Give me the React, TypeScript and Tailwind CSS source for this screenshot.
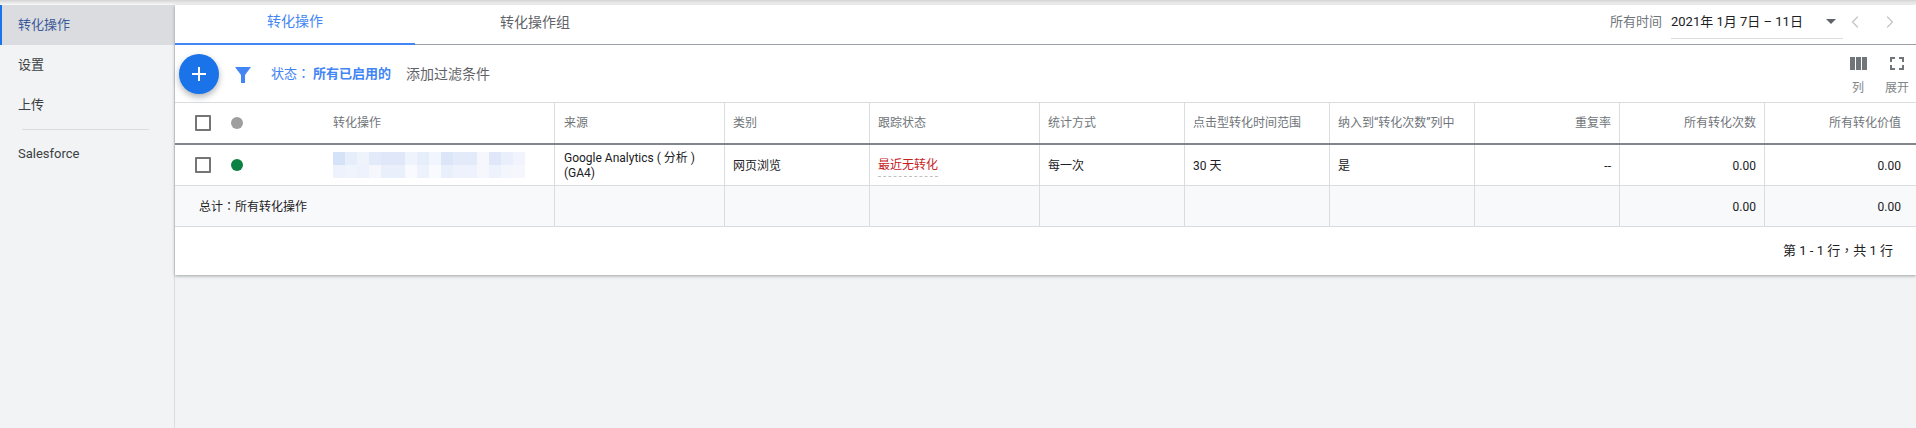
import { ChevronLeft, ChevronRight } from "lucide-react";

const columns = [
  { label: "来源", right: false },
  { label: "类别", right: false },
  { label: "跟踪状态", right: false },
  { label: "统计方式", right: false },
  { label: "点击型转化时间范围", right: false },
  { label: "纳入到“转化次数”列中", right: false },
  { label: "重复率", right: true },
  { label: "所有转化次数", right: true },
  { label: "所有转化价值", right: true },
];

const gridCols = "grid grid-cols-[379px_170px_145px_170px_145px_145px_145px_145px_145px_152px]";

const blurTop = [
  "bg-[#d5e2f8]", "bg-[#e6edfb]", "bg-[#eef3fc]", "bg-[#e3eafa]", "bg-[#dfe7f9]", "bg-[#dfe7f9]", "bg-[#eef3fc]", "bg-[#e6edfb]",
  "bg-[#f1f5fd]", "bg-[#dde6f9]", "bg-[#e3eafa]", "bg-[#e3eafa]", "bg-[#f5f7fd]", "bg-[#dfe7f9]", "bg-[#e9effb]", "bg-[#f1f4fc]",
];
const blurBottom = [
  "bg-[#eef2fc]", "bg-[#f0f4fc]", "bg-[#eef2fc]", "bg-[#f5f7fd]", "bg-[#eaf0fb]", "bg-[#eaf0fb]", "bg-[#f8fafe]", "bg-[#eef2fc]",
  "bg-[#f8fafe]", "bg-[#eaf0fb]", "bg-[#eef2fc]", "bg-[#eef2fc]", "bg-[#f5f7fd]", "bg-[#eef2fc]", "bg-[#f3f6fc]", "bg-[#f5f7fd]",
];

// the reference sets full-width punctuation centred in its box
function Punct({ children }: { children: string }) {
  return <span className="font-['Noto_Sans_CJK_TC',sans-serif]">{children}</span>;
}

function Checkbox() {
  return <div className="w-[16px] h-[16px] border-2 border-[#757575] rounded-[1px] bg-white" />;
}

function SideItem({ label, active }: { label: string; active?: boolean }) {
  return (
    <div
      className={`h-[40px] flex items-center text-[13px] ${
        active ? "bg-[#dadce0] border-l-2 border-[#1a73e8] pl-[16px] text-[#3c5a9a]" : "pl-[18px] text-[#3c4043]"
      }`}
    >
      {label}
    </div>
  );
}

function BodyCell({ children, right, pr }: { children?: React.ReactNode; right?: boolean; pr?: string }) {
  return (
    <div
      className={`border-l border-[#dadce0] flex items-center pt-px text-[12px] text-[#202124] ${
        right ? `justify-end ${pr ?? "pr-[8px]"}` : "pl-[8px]"
      }`}
    >
      {children}
    </div>
  );
}

export default function App() {
  return (
    <div className="w-[1916px] h-[428px] overflow-hidden bg-[#f1f3f4] font-['Roboto','Noto_Sans_CJK_SC',sans-serif]">
      <div className="h-[5px] bg-gradient-to-b from-[#d4d4d4] to-[#fafafa]" />
      <div className="flex">
        <aside className="w-[175px] shrink-0 h-[423px] bg-[#f1f3f4] border-r border-[#dadce0]">
          <SideItem label="转化操作" active />
          <SideItem label="设置" />
          <SideItem label="上传" />
          <div className="h-px bg-[#dadce0] ml-[22px] mr-[25px] mt-[4px] mb-[4px]" />
          <SideItem label="Salesforce" />
        </aside>

        <main className="w-[1741px]">
          <div className="bg-white shadow-[0_1px_3px_rgba(60,64,67,0.45)]">
            {/* tabs and date range */}
            <div className="h-[40px] flex items-stretch border-b border-[#9aa0a6]">
              <div className="w-[240px] -mb-px border-b-2 border-[#4285f4] flex items-center justify-center pb-[5px] text-[14px] text-[#4285f4]">
                转化操作
              </div>
              <div className="w-[240px] flex items-center justify-center pb-[5px] text-[14px] text-[#5f6368]">转化操作组</div>
              <div className="flex-1 flex items-center justify-end pb-[5px] pr-[16px]">
                <span className="text-[13px] text-[#70757a] mr-[9px]">所有时间</span>
                <div className="w-[172px] h-[31px] border-b border-[#dadce0] flex items-center justify-between pr-[4px] pb-[2px] mt-[2px]">
                  <span className="text-[13px] text-[#202124] whitespace-nowrap">2021年 1月 7日 – 11日</span>
                  <span className="w-0 h-0 border-x-[5px] border-x-transparent border-t-[5px] border-t-[#5f6368] mr-[3px]" />
                </div>
                <ChevronLeft size={20} strokeWidth={1.6} className="text-[#c4c7cb] ml-[2px]" />
                <ChevronRight size={20} strokeWidth={1.6} className="text-[#c4c7cb] ml-[15px]" />
              </div>
            </div>

            {/* filter bar */}
            <div className="h-[58px] flex items-center border-b border-[#dadce0] pl-[4px] pr-[7px]">
              <button className="w-[40px] h-[40px] rounded-full bg-[#1a73e8] flex items-center justify-center shadow-[0_3px_6px_rgba(60,64,67,0.4)]">
                <svg width="14" height="14" viewBox="0 0 14 14">
                  <path d="M6 0h2v6h6v2H8v6H6V8H0V6h6z" fill="#fff" />
                </svg>
              </button>
              <svg width="16" height="16" viewBox="0 0 16 16" className="ml-[16px] mt-[2px]">
                <path d="M0 0h16L10 8v8H6V8z" fill="#4285f4" />
              </svg>
              <span className="ml-[20px] text-[13px] text-[#4285f4]">
                状态<Punct>：</Punct>
              </span>
              <span className="ml-[3px] text-[13px] font-bold text-[#4285f4]">所有已启用的</span>
              <span className="ml-[15px] mt-[2px] text-[14px] text-[#5f6368]">添加过滤条件</span>
              <div className="ml-auto self-start mt-[12px] flex gap-[17px] text-[12px] text-[#80868b]">
                <div className="w-[20px] flex flex-col items-center gap-[11px]">
                  <svg width="17" height="13" viewBox="0 0 17 13">
                    <path d="M0 0h5v13H0zM6 0h5v13H6zM12 0h5v13h-5z" fill="#70757a" />
                  </svg>
                  <span className="leading-[14px]">列</span>
                </div>
                <div className="w-[24px] flex flex-col items-center gap-[11px]">
                  <svg width="14" height="13" viewBox="0 0 14 13">
                    <path d="M0 0h5v2H2v3H0zM9 0h5v5h-2V2H9zM0 8h2v3h3v2H0zM12 8h2v5H9v-2h3z" fill="#70757a" />
                  </svg>
                  <span className="leading-[14px] whitespace-nowrap">展开</span>
                </div>
              </div>
            </div>

            {/* table */}
            <div className={`${gridCols} h-[42px] border-b-2 border-[#80868b]`}>
              <div className="flex items-center pl-[20px]">
                <Checkbox />
                <span className="w-[12px] h-[12px] rounded-full bg-[#9e9e9e] ml-[20px]" />
                <span className="ml-[90px] text-[12px] text-[#70757a]">转化操作</span>
              </div>
              {columns.map((c, i) => (
                <div
                  key={c.label}
                  className={`border-l border-[#dadce0] flex items-center text-[12px] text-[#70757a] whitespace-nowrap ${
                    c.right ? `justify-end ${i === 8 ? "pr-[15px]" : "pr-[8px]"}` : i === 0 ? "pl-[9px]" : "pl-[8px]"
                  }`}
                >
                  {c.label}
                </div>
              ))}
            </div>

            <div className={`${gridCols} h-[41px] border-b border-[#dadce0]`}>
              <div className="flex items-center pl-[20px]">
                <Checkbox />
                <span className="w-[12px] h-[12px] rounded-full bg-[#0b8043] ml-[20px]" />
                <div className="ml-[90px] w-[192px] grid grid-cols-[repeat(16,12px)]">
                  {blurTop.map((c, i) => (
                    <div key={i} className={`h-[13px] ${c}`} />
                  ))}
                  {blurBottom.map((c, i) => (
                    <div key={i} className={`h-[13px] ${c}`} />
                  ))}
                </div>
              </div>
              <BodyCell>
                <span className="ml-px leading-[15px]">
                  Google Analytics ( 分析 )
                  <br />
                  (GA4)
                </span>
              </BodyCell>
              <BodyCell>网页浏览</BodyCell>
              <BodyCell>
                <span className="text-[#c5221f] border-b border-dashed border-[#bdc1c6] pb-[2px] mt-[2px]">最近无转化</span>
              </BodyCell>
              <BodyCell>每一次</BodyCell>
              <BodyCell>30 天</BodyCell>
              <BodyCell>是</BodyCell>
              <BodyCell right>--</BodyCell>
              <BodyCell right>0.00</BodyCell>
              <BodyCell right pr="pr-[15px]">0.00</BodyCell>
            </div>

            <div className={`${gridCols} h-[41px] bg-[#f8f9fa] border-b border-[#dadce0]`}>
              <div className="flex items-center pl-[24px] text-[12px] text-[#202124]">
                <span>
                  总计<Punct>：</Punct>所有转化操作
                </span>
              </div>
              <BodyCell />
              <BodyCell />
              <BodyCell />
              <BodyCell />
              <BodyCell />
              <BodyCell />
              <BodyCell />
              <BodyCell right>0.00</BodyCell>
              <BodyCell right pr="pr-[15px]">0.00</BodyCell>
            </div>

            {/* pagination */}
            <div className="h-[48px] flex items-center justify-end pr-[23px] pb-[2px] text-[13px] text-[#202124]">
              <span>
                第 1 - 1 行<Punct>，</Punct>共 1 行
              </span>
            </div>
          </div>
        </main>
      </div>
    </div>
  );
}
